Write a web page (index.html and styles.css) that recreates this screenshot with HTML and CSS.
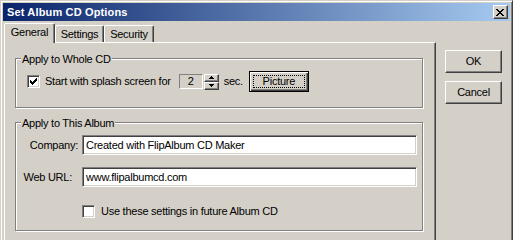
FILE: index.html
```html
<!DOCTYPE html>
<html>
<head>
<meta charset="utf-8">
<title>Set Album CD Options</title>
<link rel="stylesheet" href="styles.css">
</head>
<body>
<div class="window">
  <div class="titlebar">
    <span class="title">Set Album CD Options</span>
    <span class="close"><svg width="8" height="7" viewBox="0 0 8 7"><path d="M0 0h2v1H0zM6 0h2v1H6zM1 1h2v1H1zM5 1h2v1H5zM2 2h4v1H2zM3 3h2v1H3zM2 4h4v1H2zM1 5h2v1H1zM5 5h2v1H5zM0 6h2v1H0zM6 6h2v1H6z" fill="#000"/></svg></span>
  </div>
  <div class="main">
    <div class="tabcol">
      <div class="tabs">
        <div class="tab active">General</div>
        <div class="tab t-settings">Settings</div>
        <div class="tab t-security">Security</div>
      </div>
      <div class="panel">
        <fieldset class="group g1">
          <legend>Apply to Whole CD</legend>
          <div class="inner row1">
            <span class="check"><svg width="7" height="7" viewBox="0 0 7 7"><path d="M0 2h1v3H0zM1 3h1v3H1zM2 4h1v3H2zM3 3h1v3H3zM4 2h1v3H4zM5 1h1v3H5zM6 0h1v3H6z" fill="#000"/></svg></span>
            <span class="lbl-splash">Start with splash screen for</span>
            <span class="spinedit">2</span>
            <span class="spin">
              <span class="spinbtn"><svg width="5" height="3" viewBox="0 0 5 3"><path d="M2 0h1v1h1v1h1v1H0V2h1V1h1z" fill="#000"/></svg></span>
              <span class="spinbtn"><svg width="5" height="3" viewBox="0 0 5 3"><path d="M0 0h5v1H4v1H3v1H2V2H1V1H0z" fill="#000"/></svg></span>
            </span>
            <span class="sec">sec.</span>
            <span class="btn default"><span class="focus">Picture</span></span>
          </div>
        </fieldset>
        <fieldset class="group g2">
          <legend>Apply to This Album</legend>
          <div class="inner form">
            <label class="flabel company">Company:</label>
            <div class="edit">Created with FlipAlbum CD Maker</div>
            <label class="flabel url">Web URL:</label>
            <div class="edit">www.flipalbumcd.com</div>
            <span class="spacer"></span>
            <div class="checkrow"><span class="check"></span><span>Use these settings in future Album CD</span></div>
          </div>
        </fieldset>
      </div>
    </div>
    <div class="btncol">
      <div class="btn dlg">OK</div>
      <div class="btn dlg">Cancel</div>
    </div>
  </div>
</div>
</body>
</html>
```
FILE: styles.css
```css
* { box-sizing: border-box; }
html, body { margin: 0; padding: 0; overflow: hidden; }
body {
  width: 513px; height: 240px;
  background: #d4d0c8;
  font: 11px/13px "Liberation Sans", Arial, sans-serif;
  letter-spacing: -0.25px;
  color: #000;
}
.window {
  width: 513px; height: 280px;
  background: #d4d0c8;
  border: 1px solid;
  border-color: #d4d0c8 #404040 #404040 #d4d0c8;
  box-shadow: inset 1px 1px 0 #fff, inset -1px -1px 0 #808080;
  padding: 2px;
}
.titlebar {
  height: 18px;
  background: linear-gradient(to right, #0a246a, #a6caf0);
  display: flex; align-items: center; justify-content: space-between;
  padding: 0 2px 0 4px;
  color: #fff;
}
.title { font-weight: bold; line-height: 18px; letter-spacing: 0.15px; }
.close {
  width: 15px; height: 14px;
  background: #d4d0c8;
  border: 1px solid; border-color: #fff #404040 #404040 #fff;
  box-shadow: inset -1px -1px 0 #808080;
  display: flex; align-items: center; justify-content: center;
  padding-right: 1px;
}
.close svg { display: block; }
.main { display: flex; }
.tabcol { width: 432px; margin-left: 1px; padding-top: 2px; }
.tabs { display: flex; align-items: flex-end; height: 19px; }
.tab {
  height: 17px;
  border-top: 1px solid #fff; border-left: 1px solid #fff; border-right: 1px solid #404040;
  border-top-left-radius: 2px; border-top-right-radius: 2px;
  box-shadow: inset -1px 0 0 #808080;
  text-align: center;
  padding-top: 2px;
}
.tab.active { width: 51px; height: 20px; margin-bottom: -1px; position: relative; z-index: 1; background: #d4d0c8; }
.t-settings { width: 49px; }
.t-security { width: 50px; }
.panel {
  height: 220px;
  border-top: 1px solid #fff; border-left: 1px solid #fff; border-right: 1px solid #404040;
  box-shadow: inset -1px 0 0 #808080;
  padding: 8px 12px 0 10px;
}
.group {
  margin: 0; padding: 0; min-width: 0;
  border: 1px solid #808080;
  box-shadow: 1px 1px 0 #fff, inset 1px 1px 0 #fff;
}
.group legend {
  margin-left: 5px;
  padding: 2px 1px 0 1px;
  line-height: 13px;
  background: #d4d0c8;
}
.g2 { margin-top: 7px; }
.inner { padding: 5px 0 15px 11px; }
.row1 { display: flex; align-items: center; height: 41px; padding-top: 5px; padding-bottom: 15px; }
.check {
  width: 13px; height: 13px; flex: none;
  background: #fff;
  border: 1px solid; border-color: #808080 #fff #fff #808080;
  box-shadow: inset 1px 1px 0 #404040, inset -1px -1px 0 #d4d0c8;
  display: flex; align-items: center; justify-content: center;
}
.check svg { display: block; }
.lbl-splash { margin-left: 5px; }
.spinedit {
  margin-left: 8px;
  width: 24px; height: 15px;
  border: 1px solid; border-color: #808080 #fff #fff #808080;
  text-align: center; line-height: 13px;
}
.spin { display: flex; flex-direction: column; margin-left: 1px; }
.spinbtn {
  width: 15px; height: 8px;
  border: 1px solid; border-color: #fff #404040 #404040 #fff;
  box-shadow: inset -1px -1px 0 #808080;
  display: flex; align-items: center; justify-content: center;
}
.spinbtn svg { display: block; }
.sec { margin-left: 5px; }
.btn {
  display: flex; align-items: center; justify-content: center;
  background: #d4d0c8;
  border: 1px solid; border-color: #fff #404040 #404040 #fff;
  box-shadow: inset -1px -1px 0 #808080;
}
.btn.default {
  margin-left: 6px;
  width: 60px; height: 21px;
  border: 1px solid #000;
  box-shadow: inset 1px 1px 0 #fff, inset -1px -1px 0 #404040, inset -2px -2px 0 #808080;
  padding: 3px;
}
.focus {
  flex: 1; align-self: stretch;
  border: 1px dotted #000;
  display: flex; align-items: center; justify-content: center;
}
.form {
  display: grid;
  grid-template-columns: 66px 335px;
  grid-auto-rows: 20px;
  row-gap: 12px;
  padding: 5px 0 11px 0;
}
.flabel { line-height: 20px; text-align: right; }
.flabel.company { padding-right: 4px; }
.flabel.url { padding-right: 10px; }
.edit {
  background: #fff;
  border: 1px solid; border-color: #808080 #fff #fff #808080;
  box-shadow: inset 1px 1px 0 #404040, inset -1px -1px 0 #d4d0c8;
  padding-left: 3px;
  line-height: 18px;
}
.form .checkrow { display: flex; align-items: center; gap: 6px; height: 13px; margin-top: 6px; grid-column: 2; }
.form .spacer { display: none; }
.btncol { margin-left: 9px; padding-top: 29px; display: flex; flex-direction: column; gap: 8px; }
.btn.dlg { width: 57px; height: 23px; }
```
